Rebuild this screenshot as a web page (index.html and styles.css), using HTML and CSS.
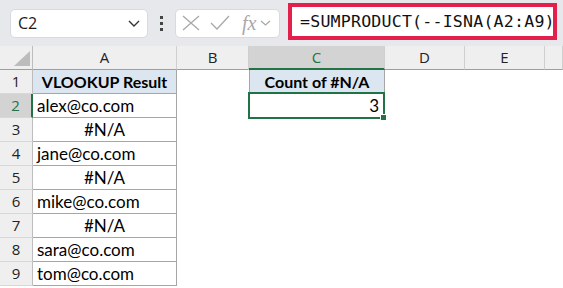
FILE: index.html
```html
<!DOCTYPE html>
<html lang="en">
  <head>
    <meta charset="UTF-8" />
    <title>SUMPRODUCT ISNA</title>
    <link rel="stylesheet" href="styles.css">
  </head>
  <body>
    <div class="toolbar">
      <div class="namebox">
        <span>C2</span>
        <svg width="12" height="7" viewBox="0 0 12 7"><path d="M1 1 L6 6 L11 1" fill="none" stroke="#333" stroke-width="1.4"/></svg>
      </div>
      <div class="dots"><i></i><i></i><i></i></div>
      <div class="fxbox">
        <svg width="18" height="16" viewBox="0 0 18 16"><path d="M1 1 L17 15 M17 1 L1 15" stroke="#a8a8a8" stroke-width="1.3" fill="none"/></svg>
        <svg width="20" height="16" viewBox="0 0 20 16"><path d="M1 8 L7 14 L19 1" stroke="#a8a8a8" stroke-width="1.3" fill="none"/></svg>
        <span class="fx">fx</span>
        <svg width="11" height="6" viewBox="0 0 11 6"><path d="M1 1 L5.5 5 L10 1" fill="none" stroke="#a8a8a8" stroke-width="1.2"/></svg>
      </div>
      <div class="formula">=SUMPRODUCT(--ISNA(A2:A9))</div>
    </div>

    <div class="sheet">
      <div class="hdr corner"><span class="tri"></span></div>
      <div class="hdr">A</div>
      <div class="hdr">B</div>
      <div class="hdr active">C</div>
      <div class="hdr">D</div>
      <div class="hdr">E</div>
      <div class="hdr"></div>

      <div class="rh">1</div>
      <div class="cell tbl head">VLOOKUP Result</div>
      <div class="cell"></div>
      <div class="cell tbl head boxed">Count of #N/A</div>
      <div class="rest short"></div>

      <div class="rh active">2</div>
      <div class="cell tbl">alex@co.com</div>
      <div class="cell"></div>
      <div class="cell num">3</div>
      <div class="rest short"></div>

      <div class="rh">3</div>
      <div class="cell tbl na">#N/A</div>
      <div class="rest"></div>

      <div class="rh">4</div>
      <div class="cell tbl">jane@co.com</div>
      <div class="rest"></div>

      <div class="rh">5</div>
      <div class="cell tbl na">#N/A</div>
      <div class="rest"></div>

      <div class="rh">6</div>
      <div class="cell tbl">mike@co.com</div>
      <div class="rest"></div>

      <div class="rh">7</div>
      <div class="cell tbl na">#N/A</div>
      <div class="rest"></div>

      <div class="rh">8</div>
      <div class="cell tbl">sara@co.com</div>
      <div class="rest"></div>

      <div class="rh">9</div>
      <div class="cell tbl">tom@co.com</div>
      <div class="rest"></div>

      <div class="selection"><span class="handle"></span></div>
    </div>
  </body>
</html>
```

FILE: styles.css
```css
body {
  margin: 0;
  width: 563px;
  height: 288px;
  overflow: hidden;
  background-color: #ffffff;
  font-family: "Lato", "Liberation Sans", sans-serif;
  color: #000000;
}

/* formula bar area */
.toolbar {
  height: 46px;
  background-color: #e7e8ec;
  display: flex;
  align-items: center;
  padding-left: 10px;
  box-sizing: border-box;
  position: relative;
}

.namebox {
  width: 138px;
  height: 29px;
  box-sizing: border-box;
  background-color: #ffffff;
  border: 1px solid #d9dadd;
  border-radius: 5px;
  display: flex;
  align-items: center;
  justify-content: space-between;
  padding: 0 7px 0 7px;
  font-family: "Open Sans", "Liberation Sans", sans-serif;
  font-size: 16px;
  color: #1b1b1b;
}

.dots {
  width: 27px;
  display: flex;
  flex-direction: column;
  align-items: center;
  gap: 3px;
}

.dots i {
  display: block;
  width: 3px;
  height: 3px;
  background-color: #444444;
}

.fxbox {
  width: 105px;
  height: 29px;
  box-sizing: border-box;
  background-color: #ffffff;
  border: 1px solid #d9dadd;
  border-radius: 5px;
  display: flex;
  align-items: center;
  padding-left: 6px;
  gap: 10px;
}

.fx {
  font-family: "Liberation Serif", serif;
  font-style: italic;
  font-size: 20px;
  color: #a8a8a8;
  margin-left: 2px;
  margin-right: -6px;
}

.formula {
  margin-left: 8px;
  align-self: flex-start;
  margin-top: 3px;
  width: 269px;
  height: 37px;
  box-sizing: border-box;
  border: 4px solid #e2204b;
  background-color: #ffffff;
  padding-left: 8px;
  font-family: "DejaVu Sans Mono", "Liberation Mono", monospace;
  font-size: 16.6px;
  letter-spacing: 0.2px;
  line-height: 29px;
  white-space: nowrap;
  overflow: hidden;
  color: #111111;
}

/* worksheet */
.sheet {
  display: grid;
  grid-template-columns: 33px 144px 72px 136px 80px 80px 1fr;
  grid-auto-rows: 24px;
  position: relative;
}

.hdr {
  background-color: #efefef;
  border-right: 1px solid #cfcfcf;
  border-bottom: 1px solid #9e9e9e;
  box-sizing: border-box;
  text-align: center;
  font-family: "Open Sans", "Liberation Sans", sans-serif;
  font-size: 15px;
  line-height: 23px;
  color: #222222;
}

.hdr.active {
  background-color: #d3d3d3;
  color: #217346;
  border-bottom: 2px solid #217346;
}

.corner {
  position: relative;
  border-right: 1px solid #bdbdbd;
}

.tri {
  position: absolute;
  right: 2px;
  bottom: 3px;
  width: 0;
  height: 0;
  border-left: 16px solid transparent;
  border-bottom: 15px solid #bcbcbc;
}

.rh {
  background-color: #efefef;
  border-right: 1px solid #bdbdbd;
  border-bottom: 1px solid #d8d8d8;
  box-sizing: border-box;
  text-align: center;
  font-family: "Open Sans", "Liberation Sans", sans-serif;
  font-size: 15px;
  line-height: 23px;
  color: #222222;
}

.rh.active {
  background-color: #d3d3d3;
  color: #217346;
  border-right: 2px solid #217346;
}

.cell {
  box-sizing: border-box;
  font-size: 17px;
  line-height: 23px;
  padding: 0 4px;
  white-space: nowrap;
}

.tbl {
  border-right: 1px solid #a6a6a6;
  border-bottom: 1px solid #a6a6a6;
}

.head {
  background-color: #dce6f1;
  font-weight: bold;
  font-size: 16px;
  text-align: center;
}

.boxed {
  border-left: 1px solid #a6a6a6;
}

.na {
  text-align: center;
}

.num {
  text-align: right;
  padding-right: 6px;
}

.rest {
  grid-column: span 5;
}

.rest.short {
  grid-column: span 3;
}

.selection {
  position: absolute;
  left: 248px;
  top: 46px;
  width: 137px;
  height: 27px;
  box-sizing: border-box;
  border: 2px solid #217346;
}

.handle {
  position: absolute;
  right: -4px;
  bottom: -4px;
  width: 5px;
  height: 5px;
  background-color: #217346;
  border: 1px solid #ffffff;
}
```
